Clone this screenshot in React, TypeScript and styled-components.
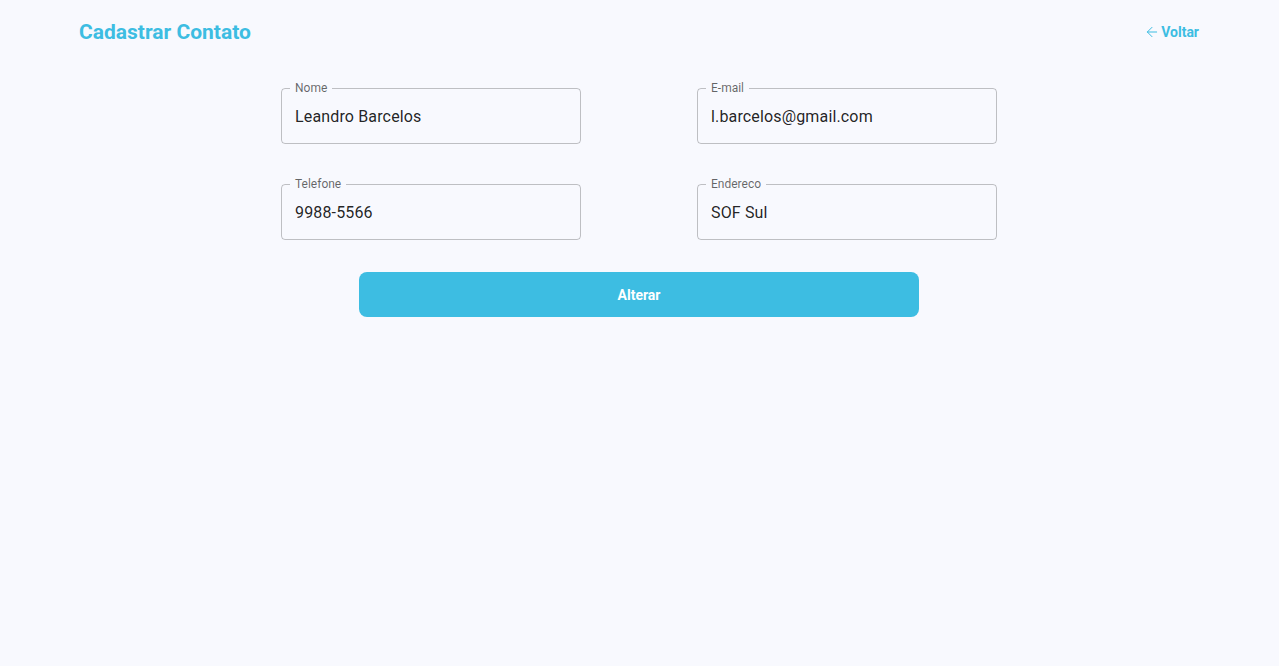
import React from "react";
import styled, { createGlobalStyle } from "styled-components";
import { ArrowLeft } from "lucide-react";

const BG = "#f8f9fe";
const PRIMARY = "#3dbde2";

const Global = createGlobalStyle`
  html, body { margin: 0; padding: 0; background: ${BG}; }
  body { font-family: Roboto, "Noto Sans", sans-serif; }
  * { box-sizing: border-box; }
`;

const Page = styled.div`
  min-height: 666px;
  background: ${BG};
  padding-right: 1px;
  display: flex;
  flex-direction: column;
  align-items: center;
`;

const Header = styled.header`
  width: 1120px;
  height: 64px;
  display: flex;
  align-items: center;
  justify-content: space-between;
`;

const Title = styled.h1`
  margin: 0;
  font-size: 21px;
  font-weight: 700;
  color: ${PRIMARY};
  letter-spacing: 0;
`;

const BackLink = styled.a`
  display: flex;
  align-items: center;
  gap: 1px;
  font-size: 14px;
  font-weight: 700;
  color: ${PRIMARY};
  text-decoration: none;
  cursor: pointer;
`;

const Form = styled.form`
  margin-top: 24px;
  display: flex;
  flex-direction: column;
  align-items: center;
`;

const Grid = styled.div`
  display: grid;
  grid-template-columns: 300px 300px;
  column-gap: 116px;
  row-gap: 40px;
`;

const Field = styled.div`
  position: relative;
  height: 56px;
  border: 1px solid rgba(0, 0, 0, 0.23);
  border-radius: 4px;
  display: flex;
  align-items: center;
  padding: 0 13px;
`;

const Label = styled.label`
  position: absolute;
  top: -9px;
  left: 8px;
  padding: 0 5px;
  background: ${BG};
  font-size: 12px;
  line-height: 16px;
  color: rgba(0, 0, 0, 0.6);
`;

const Input = styled.input`
  width: 100%;
  border: 0;
  outline: none;
  background: transparent;
  font-family: Roboto, sans-serif;
  font-size: 16px;
  color: rgba(0, 0, 0, 0.87);
  padding: 0;
  letter-spacing: 0.15px;
`;

const Button = styled.button`
  margin-top: 32px;
  width: 560px;
  height: 45px;
  border: 0;
  border-radius: 8px;
  background: ${PRIMARY};
  color: #fff;
  font-family: Roboto, sans-serif;
  font-size: 14px;
  font-weight: 700;
  cursor: pointer;
`;

const fields = [
  { label: "Nome", value: "Leandro Barcelos" },
  { label: "E-mail", value: "l.barcelos@gmail.com" },
  { label: "Telefone", value: "9988-5566" },
  { label: "Endereco", value: "SOF Sul" },
];

export default function App() {
  return (
    <Page>
      <Global />
      <Header>
        <Title>Cadastrar Contato</Title>
        <BackLink>
          <ArrowLeft size={16} strokeWidth={1.5} />
          Voltar
        </BackLink>
      </Header>
      <Form onSubmit={(e) => e.preventDefault()}>
        <Grid>
          {fields.map((f) => (
            <Field key={f.label}>
              <Label>{f.label}</Label>
              <Input defaultValue={f.value} />
            </Field>
          ))}
        </Grid>
        <Button type="submit">Alterar</Button>
      </Form>
    </Page>
  );
}
